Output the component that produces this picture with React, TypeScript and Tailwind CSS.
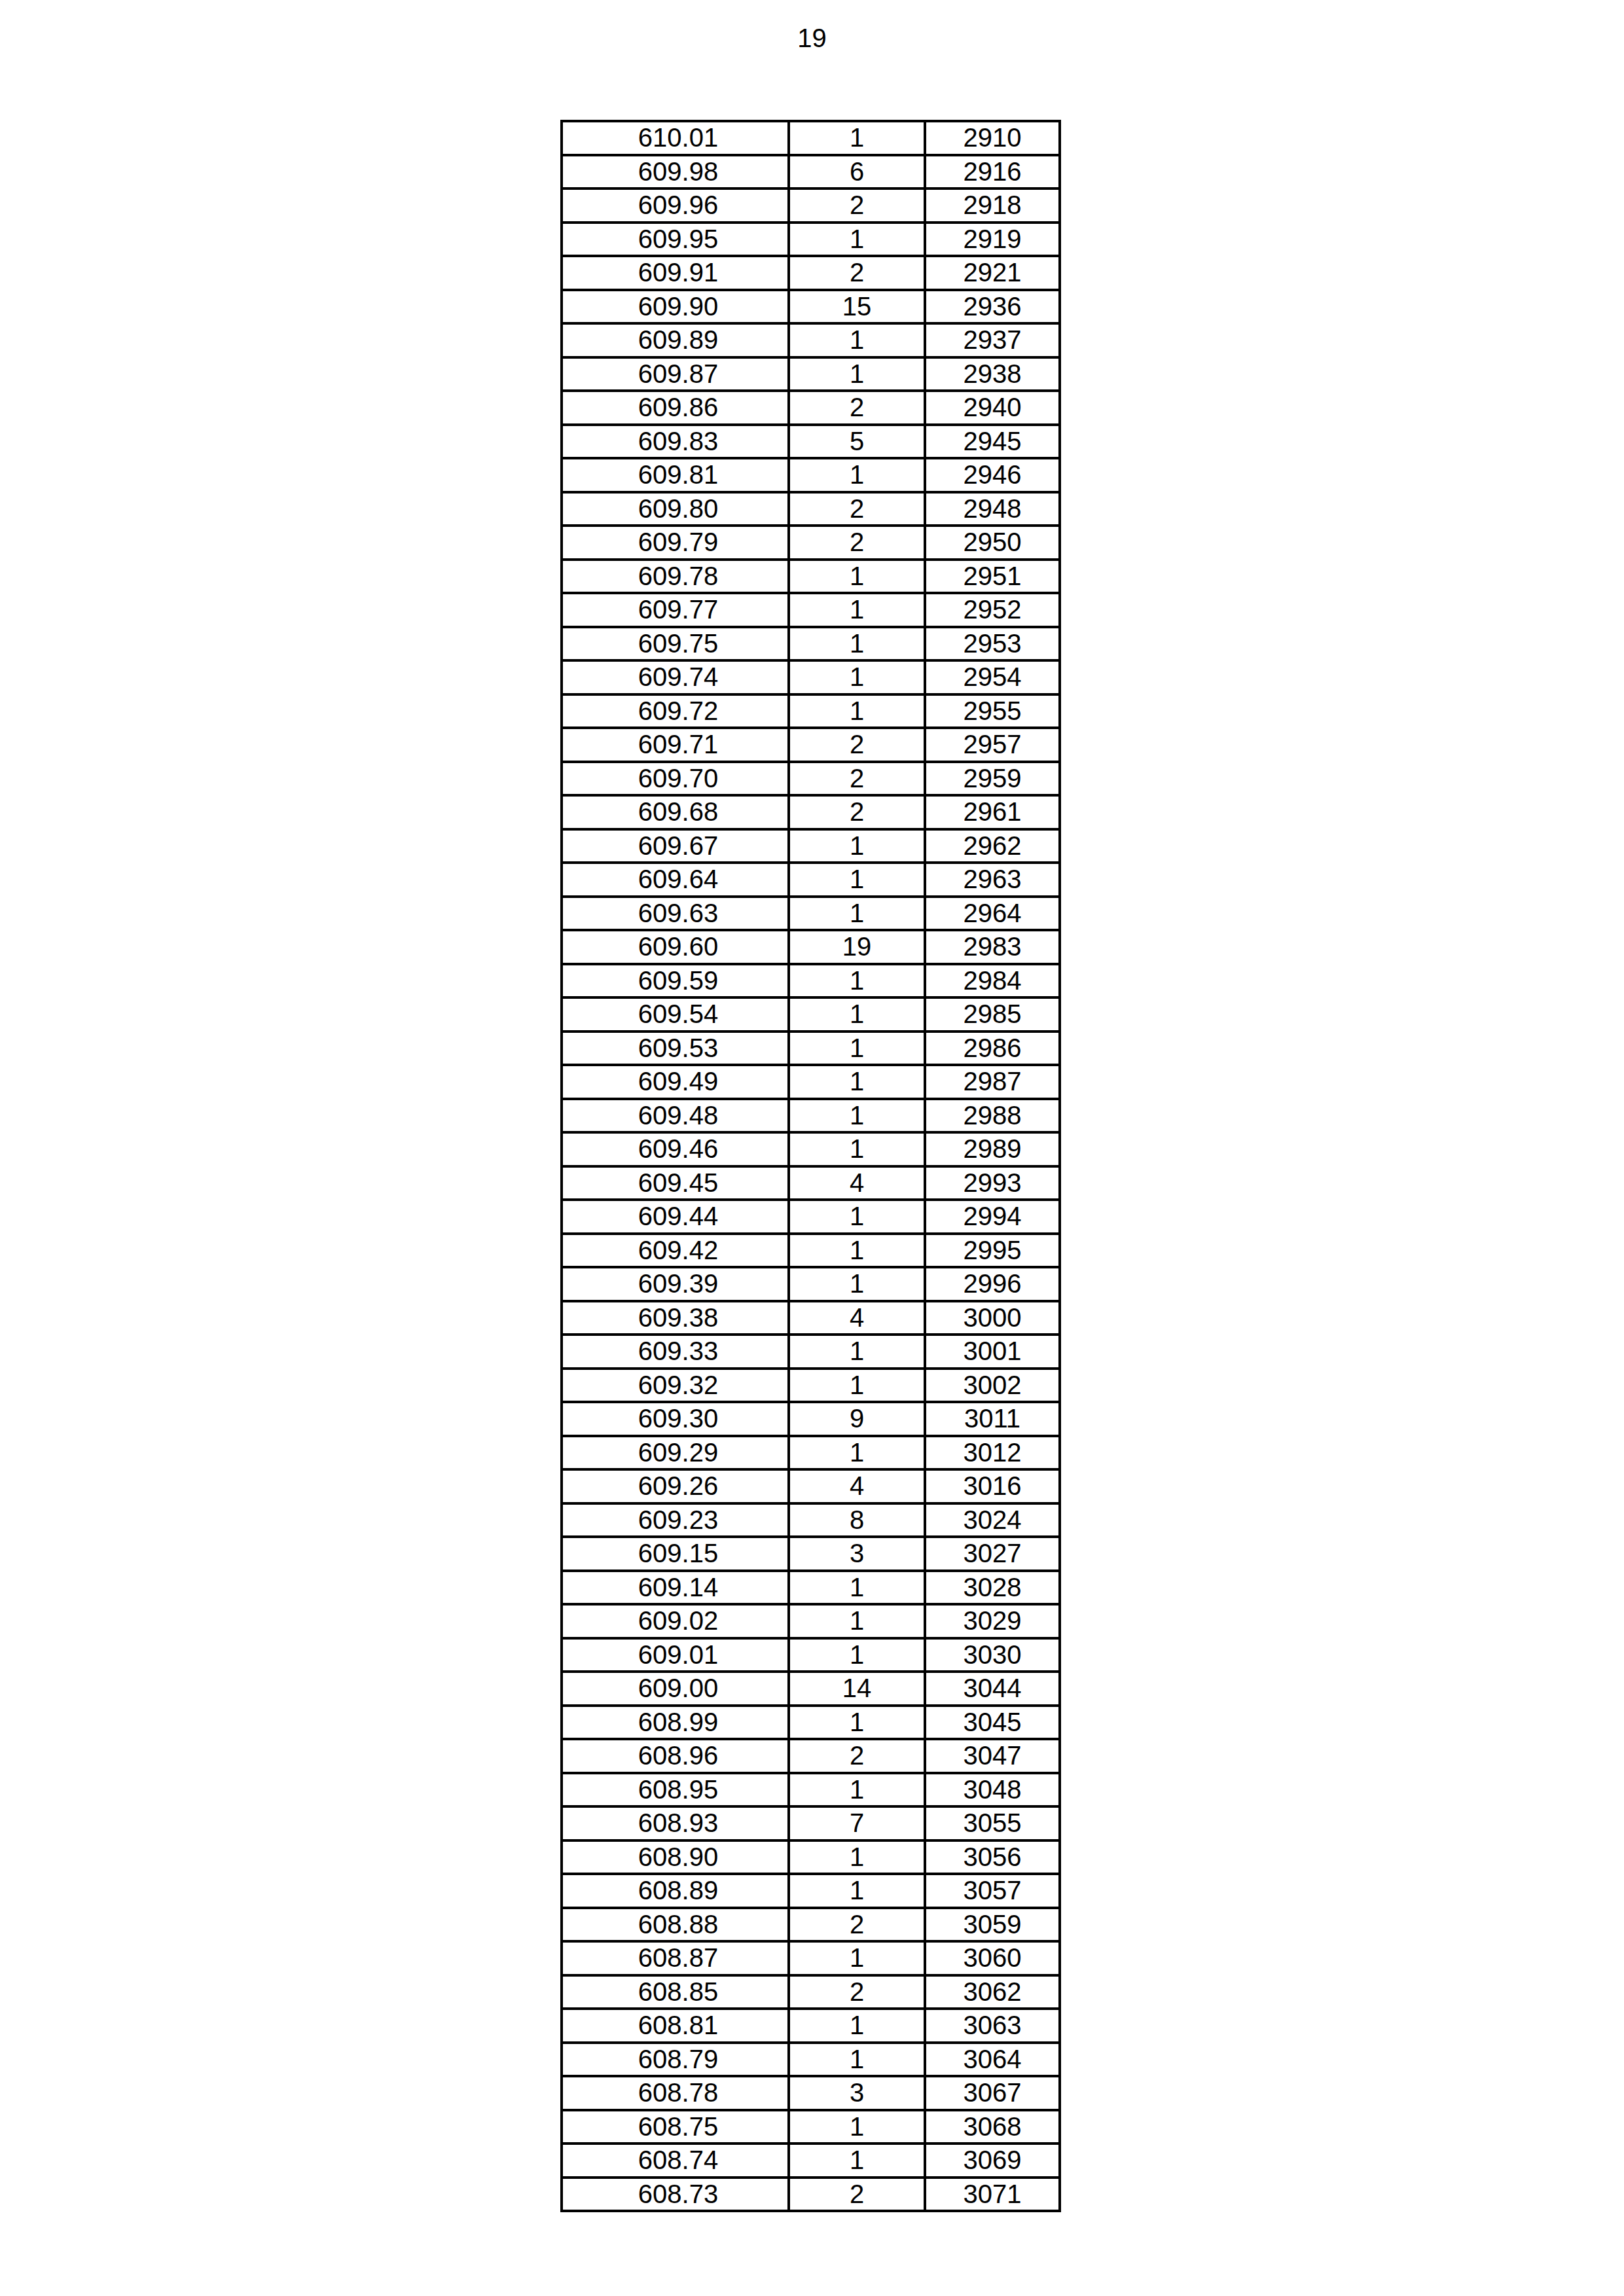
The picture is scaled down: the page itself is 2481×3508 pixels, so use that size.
import React from 'react';

// [value, count, cumulative]
const rows: [string, string, string][] = [
    ['610.01', '1', '2910'],
    ['609.98', '6', '2916'],
    ['609.96', '2', '2918'],
    ['609.95', '1', '2919'],
    ['609.91', '2', '2921'],
    ['609.90', '15', '2936'],
    ['609.89', '1', '2937'],
    ['609.87', '1', '2938'],
    ['609.86', '2', '2940'],
    ['609.83', '5', '2945'],
    ['609.81', '1', '2946'],
    ['609.80', '2', '2948'],
    ['609.79', '2', '2950'],
    ['609.78', '1', '2951'],
    ['609.77', '1', '2952'],
    ['609.75', '1', '2953'],
    ['609.74', '1', '2954'],
    ['609.72', '1', '2955'],
    ['609.71', '2', '2957'],
    ['609.70', '2', '2959'],
    ['609.68', '2', '2961'],
    ['609.67', '1', '2962'],
    ['609.64', '1', '2963'],
    ['609.63', '1', '2964'],
    ['609.60', '19', '2983'],
    ['609.59', '1', '2984'],
    ['609.54', '1', '2985'],
    ['609.53', '1', '2986'],
    ['609.49', '1', '2987'],
    ['609.48', '1', '2988'],
    ['609.46', '1', '2989'],
    ['609.45', '4', '2993'],
    ['609.44', '1', '2994'],
    ['609.42', '1', '2995'],
    ['609.39', '1', '2996'],
    ['609.38', '4', '3000'],
    ['609.33', '1', '3001'],
    ['609.32', '1', '3002'],
    ['609.30', '9', '3011'],
    ['609.29', '1', '3012'],
    ['609.26', '4', '3016'],
    ['609.23', '8', '3024'],
    ['609.15', '3', '3027'],
    ['609.14', '1', '3028'],
    ['609.02', '1', '3029'],
    ['609.01', '1', '3030'],
    ['609.00', '14', '3044'],
    ['608.99', '1', '3045'],
    ['608.96', '2', '3047'],
    ['608.95', '1', '3048'],
    ['608.93', '7', '3055'],
    ['608.90', '1', '3056'],
    ['608.89', '1', '3057'],
    ['608.88', '2', '3059'],
    ['608.87', '1', '3060'],
    ['608.85', '2', '3062'],
    ['608.81', '1', '3063'],
    ['608.79', '1', '3064'],
    ['608.78', '3', '3067'],
    ['608.75', '1', '3068'],
    ['608.74', '1', '3069'],
    ['608.73', '2', '3071'],
];

export default function App() {
    return (
        <div className="w-[2481px] min-h-[3508px] bg-white text-black font-['Liberation_Sans',Arial,sans-serif]">
            {/* Page number */}
            <div className="pt-[38px] text-center text-[40px] leading-[40px]">19</div>

            {/* Data table */}
            <div className="mt-[105px] ml-[856px] w-[765px] border-4 border-black">
                {rows.map(([value, count, total], i) => (
                    <div
                        key={value}
                        className={`flex h-[47.5px] text-[40px] leading-[47.5px] text-center box-content ${i > 0 ? 'border-t-4 border-black' : ''}`}
                    >
                        <div className="w-[343px] pl-[9px]">{value}</div>
                        <div className="w-[208px] border-l-4 border-black">{count}</div>
                        <div className="w-[206px] border-l-4 border-black">{total}</div>
                    </div>
                ))}
            </div>
        </div>
    );
}
